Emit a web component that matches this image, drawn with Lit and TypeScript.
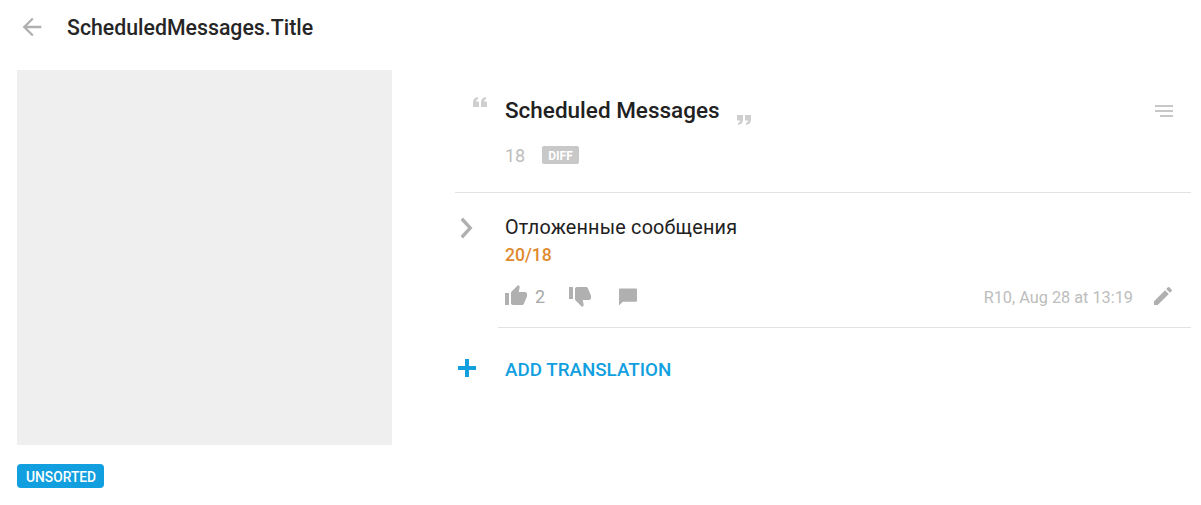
import { LitElement, html, css } from "lit";
import { customElement } from "lit/decorators.js";

@customElement("app-root")
export class AppRoot extends LitElement {
  static styles = css`
    :host { display: block; width: 1201px; height: 505px; background: #fff; overflow: hidden; font-family: Roboto, sans-serif; color: #212121; }
    svg { display: block; fill: currentColor; flex: none; }
    .header { display: flex; align-items: center; height: 54px; padding-left: 18px; }
    .back { color: #b0b0b0; margin-right: 21px; }
    .title { font-size: 21.3px; font-weight: 500; line-height: 54px; padding-top: 1px; color: #262626; }
    .main { display: flex; padding: 16px 10px 0 17px; }
    .left { width: 375px; flex: none; margin-right: 63px; }
    .preview { width: 375px; height: 375px; background: #efefef; }
    .tag { display: inline-block; margin-top: 19px; height: 24px; line-height: 26px; padding: 0 8px 0 9px; border-radius: 4px; background: #129fe0; color: #fff; font-size: 13.8px; font-weight: 500; }
    .right { flex: 1; min-width: 0; }
    .source { display: flex; height: 122px; border-bottom: 1px solid #e2e2e2; }
    .q-open { color: #cfcfcf; margin: 27px 0 0 18px; }
    .source-body { margin-left: 18px; padding-top: 24px; }
    .source-line { display: flex; align-items: flex-start; }
    .source-text { font-size: 22.5px; font-weight: 500; line-height: 32px; }
    .q-close { color: #cfcfcf; margin: 21px 0 0 17px; }
    .meta { display: flex; align-items: center; margin-top: 19px; height: 20px; }
    .count { font-size: 18px; color: #bdbdbd; margin-right: 17px; }
    .diff { background: #c8c8c8; color: #fff; font-size: 12px; font-weight: 700; height: 18px; line-height: 20px; padding: 0 6px; border-radius: 2px; }
    .menu { margin: 35px 18px 0 auto; color: #c8c8c8; }
    .translation { display: flex; }
    .chev { color: #b0b0b0; margin: 24px 0 0 3px; }
    .t-body { flex: 1; margin-left: 24px; padding-left: 7px; border-bottom: 1px solid #e2e2e2; height: 134px; }
    .t-text { font-size: 19.8px; line-height: 24px; margin-top: 23px; letter-spacing: 0.2px; }
    .t-count { font-size: 17.6px; font-weight: 500; color: #e08a2e; line-height: 24px; margin-top: 3px; }
    .actions { display: flex; align-items: center; margin-top: 17px; height: 24px; color: #b0b0b0; }
    .up { margin-left: -1px; }
    .up-n { font-size: 18px; color: #a8a8a8; margin: 0 23px 0 7px; }
    .down { transform: scaleX(-1); }
    .comment { margin-left: 27px; margin-top: 2px; }
    .stamp { margin-left: auto; font-size: 16.3px; color: #bdbdbd; margin-right: 18px; margin-top: 2px; }
    .pencil { margin-right: 16px; }
    .add { display: flex; align-items: center; height: 30px; margin-top: 25px; color: #129fe0; }
    .add svg { margin-left: 3px; }
    .add-label { margin-left: 29px; padding-top: 4px; font-size: 18.8px; font-weight: 500; }
  `;

  render() {
    return html`
      <div class="header">
        <svg class="back" width="28" height="28" viewBox="0 0 24 24"><path d="M20 11H7.830l5.590-5.590L12 4l-8 8 8 8 1.410-1.410L7.830 13H20z"/></svg>
        <div class="title">ScheduledMessages.Title</div>
      </div>
      <div class="main">
        <div class="left">
          <div class="preview"></div>
          <span class="tag">UNSORTED</span>
        </div>
        <div class="right">
          <div class="source">
            <svg class="q-open" width="14" height="10" viewBox="0 0 14 10"><path d="M0 10V5.500C0 2.500 1.500.6 5 0v2.200C3.700 2.600 3 3.400 3 4.500h3V10zM8 10V5.500C8 2.500 9.500.6 13 0v2.200c-1.300.4-2 1.200-2 2.300h3V10z"/></svg>
            <div class="source-body">
              <div class="source-line">
                <div class="source-text">Scheduled Messages</div>
                <svg class="q-close" width="14" height="10" viewBox="0 0 14 10"><path d="M14 0v4.500c0 3-1.500 4.900-5 5.500V7.800c1.300-.4 2-1.200 2-2.300H8V0zM6 0v4.500C6 7.500 4.500 9.400 1 10V7.800c1.300-.4 2-1.200 2-2.300H0V0z"/></svg>
              </div>
              <div class="meta"><span class="count">18</span><span class="diff">DIFF</span></div>
            </div>
            <svg class="menu" width="18" height="12" viewBox="0 0 18 12"><path d="M0 0h18v2H0zM0 5h18v2H0zM5 10h13v2H5z"/></svg>
          </div>
          <div class="translation">
            <svg class="chev" width="16" height="22" viewBox="0 0 16 22"><path d="M2.500 3 5 .5 14.500 11 5 21.500 2.500 19 10 11z"/></svg>
            <div class="t-body">
              <div class="t-text">Отложенные сообщения</div>
              <div class="t-count">20/18</div>
              <div class="actions">
                <svg class="up" width="24" height="24" viewBox="0 0 24 24"><path d="M1 21h4V9H1v12zm22-11c0-1.100-.9-2-2-2h-6.310l.95-4.570.03-.32c0-.41-.17-.79-.44-1.060L14.170 1 7.590 7.590C7.220 7.950 7 8.450 7 9v10c0 1.100.9 2 2 2h9c.83 0 1.540-.5 1.840-1.220l3.020-7.050c.09-.23.14-.47.14-.73v-2z"/></svg>
                <span class="up-n">2</span>
                <svg class="down" width="24" height="24" viewBox="0 0 24 24"><path d="M15 3H6c-.83 0-1.540.5-1.840 1.220l-3.020 7.050c-.09.23-.14.47-.14.73v2c0 1.100.9 2 2 2h6.310l-.95 4.570-.03.32c0 .41.170.79.440 1.060L9.830 23l6.590-6.590c.36-.36.580-.86.580-1.410V5c0-1.100-.9-2-2-2zm4 0v12h4V3h-4z"/></svg>
                <svg class="comment" width="18" height="18" viewBox="0 0 19 18"><path d="M1 0h17c.6 0 1 .4 1 1v12c0 .6-.4 1-1 1H4l-4 4V1c0-.6.400-1 1-1z"/></svg>
                <span class="stamp">R10, Aug 28 at 13:19</span>
                <svg class="pencil" width="24" height="24" viewBox="0 0 24 24"><path d="M3 17.250V21h3.750L17.810 9.940l-3.750-3.750L3 17.250zM20.710 7.040a1 1 0 0 0 0-1.410l-2.340-2.340a1 1 0 0 0-1.410 0l-1.830 1.830 3.750 3.750 1.830-1.830z"/></svg>
              </div>
            </div>
          </div>
          <div class="add">
            <svg width="18" height="18" viewBox="0 0 18 18"><path d="M7 0h4v7h7v4h-7v7H7v-7H0V7h7z"/></svg>
            <span class="add-label">ADD TRANSLATION</span>
          </div>
        </div>
      </div>
    `;
  }
}
